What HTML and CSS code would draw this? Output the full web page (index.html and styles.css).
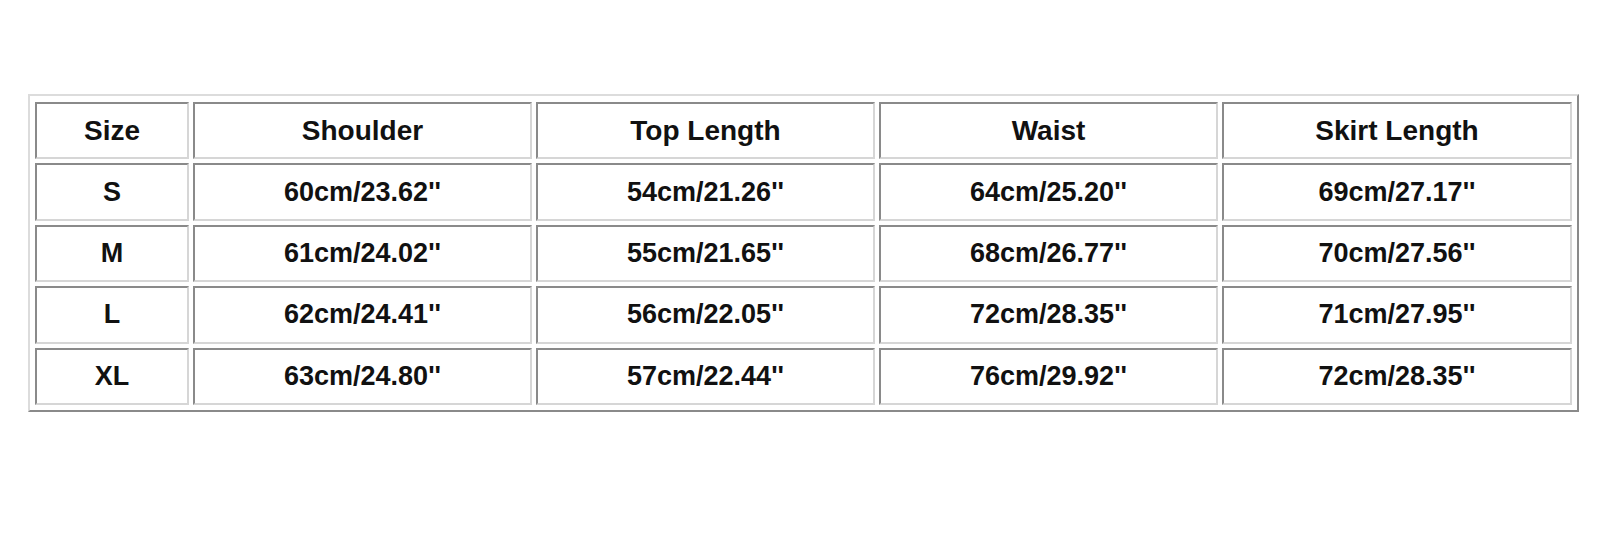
FILE: index.html
```html
<!DOCTYPE html>
<html>
<head>
<meta charset="utf-8">
<link rel="stylesheet" href="styles.css">
</head>
<body>
<table class="size-table">
  <colgroup>
    <col class="c-size">
    <col class="c-wide">
    <col class="c-wide">
    <col class="c-wide">
    <col class="c-skirt">
  </colgroup>
  <tr class="head"><td>Size</td><td>Shoulder</td><td>Top Length</td><td>Waist</td><td>Skirt Length</td></tr>
  <tr><td>S</td><td>60cm/23.62''</td><td>54cm/21.26''</td><td>64cm/25.20''</td><td>69cm/27.17''</td></tr>
  <tr><td>M</td><td>61cm/24.02''</td><td>55cm/21.65''</td><td>68cm/26.77''</td><td>70cm/27.56''</td></tr>
  <tr><td>L</td><td>62cm/24.41''</td><td>56cm/22.05''</td><td>72cm/28.35''</td><td>71cm/27.95''</td></tr>
  <tr><td>XL</td><td>63cm/24.80''</td><td>57cm/22.44''</td><td>76cm/29.92''</td><td>72cm/28.35''</td></tr>
</table>
</body>
</html>
```

FILE: styles.css
```css
html, body {
  margin: 0;
  padding: 0;
  background: #ffffff;
}
body {
  padding: 94px 0 0 28px;
  font-family: "Liberation Sans", Arial, sans-serif;
}
.size-table {
  table-layout: fixed;
  width: 1551px;
  border-collapse: separate;
  border-spacing: 4px;
  padding: 2px 1px 1px 1px;
  border: 2px solid;
  border-color: #dcdcdc #8a8a8a #8a8a8a #dcdcdc;
}
.c-size { width: 154px; }
.c-wide { width: 339px; }
.c-skirt { width: 350px; }
.size-table tr {
  height: 57.4px;
}
.size-table td {
  box-sizing: border-box;
  border: 2px solid;
  border-color: #8a8a8a #d6d6d6 #d6d6d6 #8a8a8a;
  padding: 0;
  text-align: center;
  vertical-align: middle;
  font-weight: bold;
  font-size: 27px;
  color: #111111;
}
.size-table .head td {
  font-size: 28px;
}
```
